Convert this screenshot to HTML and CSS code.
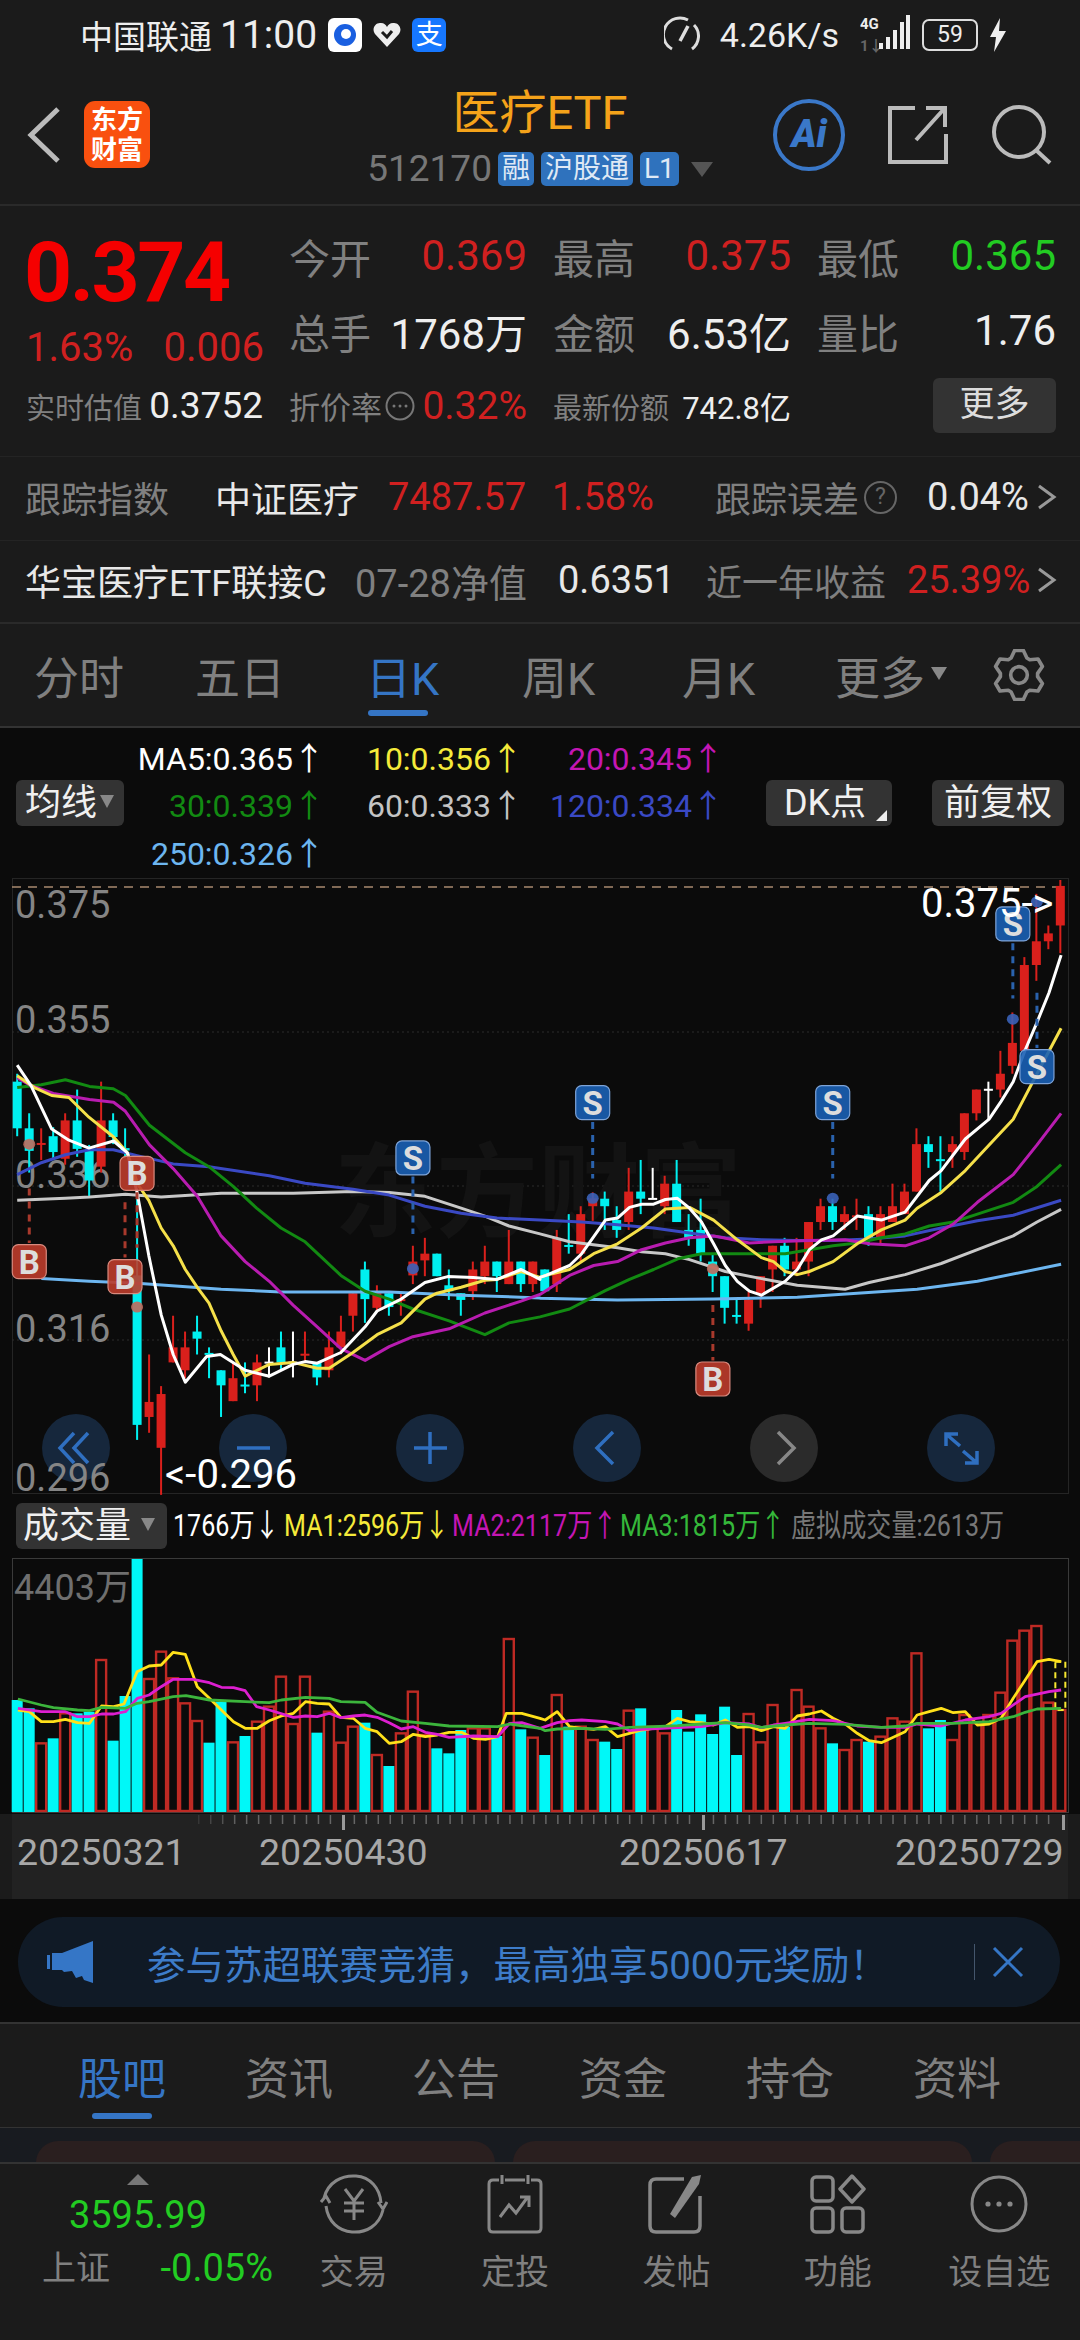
FILE: index.html
```html
<!DOCTYPE html>
<html lang="zh-CN">
<head>
    <meta charset="UTF-8">
    <meta name="viewport" content="width=device-width, initial-scale=1.0">
    <title>医疗ETF</title>
    <link rel="stylesheet" href="styles.css">
</head>
<body>
<div class="page">
    <!-- status bar -->
    <div class="status">
        <span class="carrier">中国联通</span>
        <span class="clock">11:00</span>
        <svg class="status-app" width="34" height="34" viewBox="0 0 34 34"><rect width="34" height="34" rx="6" fill="#fff"/><circle cx="17" cy="17" r="11" fill="#1a5fe0"/><circle cx="18" cy="16" r="5" fill="#fff"/></svg>
        <svg class="status-heart" width="28" height="26" viewBox="0 0 28 26"><path d="M14 25 2 12C-2 6 3 0 8 1c3 0 5 2 6 4 1-2 3-4 6-4 5-1 10 5 6 11z" fill="#eee"/><path d="M9 10l5 5 5-6" fill="none" stroke="#1b1b1b" stroke-width="3"/></svg>
        <span class="status-alipay">支</span>
        <span class="status-gap"></span>
        <svg class="status-gauge" width="36" height="44" viewBox="0 0 36 44"><path d="M8 36A16 16 0 0 1 24 7M30 12a16 16 0 0 1-2 24" fill="none" stroke="#ddd" stroke-width="3"/><path d="M24 13 16 28" stroke="#ddd" stroke-width="3.5"/></svg>
        <span class="net-speed">4.26K/s</span>
        <svg class="status-signal" width="50" height="44" viewBox="0 0 50 44"><text x="0" y="16" class="sig-text">4G</text><text x="0" y="38" class="sig-text sig-dim">1↓</text><rect x="19" y="30" width="4" height="6" fill="#eee"/><rect x="26" y="24" width="4" height="12" fill="#eee"/><rect x="33" y="17" width="4" height="19" fill="#eee"/><rect x="40" y="9" width="4" height="27" fill="#eee"/><rect x="46" y="2" width="4" height="34" fill="#eee"/></svg>
        <div class="battery">59</div>
        <svg class="status-bolt" width="16" height="34" viewBox="0 0 16 34"><path d="M10 0 0 19h6L4 34 16 13H9z" fill="#eee"/></svg>
    </div>

    <!-- title bar -->
    <div class="topbar">
        <div class="topbar-left">
            <svg width="34" height="56" viewBox="0 0 34 56"><polyline points="31,2 4,28 31,54" fill="none" stroke="#bbb" stroke-width="5"/></svg>
            <div class="logo"><span>东方</span><span>财富</span></div>
        </div>
        <div class="topbar-title">
            <div class="fund-name">医疗ETF</div>
            <div class="fund-code">
                <span class="code-num">512170</span>
                <span class="tag">融</span><span class="tag tag-wide">沪股通</span><span class="tag">L1</span>
                <span class="code-caret"></span>
            </div>
        </div>
        <div class="topbar-right">
            <div class="ai-btn">Ai</div>
            <svg width="60" height="58" viewBox="0 0 60 58"><path d="M27 2H2V56H58V28" fill="none" stroke="#bbb" stroke-width="4"/><path d="M28 34 56 3M38 2H57V21" fill="none" stroke="#bbb" stroke-width="4"/></svg>
            <svg width="60" height="60" viewBox="0 0 60 60"><circle cx="27" cy="27" r="25" fill="none" stroke="#bbb" stroke-width="4"/><path d="M45 46 58 58" stroke="#bbb" stroke-width="4"/></svg>
        </div>
    </div>

    <!-- quote block -->
    <div class="quote">
        <div class="price-box">
            <div class="price">0.374</div>
            <div class="price-change"><span>1.63%</span><span>0.006</span></div>
        </div>
        <div class="stat"><span class="muted">今开</span><span class="red">0.369</span></div>
        <div class="stat"><span class="muted">最高</span><span class="red">0.375</span></div>
        <div class="stat stat-last"><span class="muted">最低</span><span class="green">0.365</span></div>
        <div class="stat"><span class="muted">总手</span><span>1768万</span></div>
        <div class="stat"><span class="muted">金额</span><span>6.53亿</span></div>
        <div class="stat stat-last"><span class="muted">量比</span><span>1.76</span></div>
        <div class="stat stat-small stat-first"><span class="muted">实时估值</span><span class="num-m">0.3752</span></div>
        <div class="stat stat-small"><span class="muted discount">折价率<svg width="30" height="30" viewBox="0 0 30 30"><circle cx="15" cy="15" r="13.5" fill="none" stroke="#777" stroke-width="2"/><circle cx="9" cy="15" r="1.5" fill="#777"/><circle cx="15" cy="15" r="1.5" fill="#777"/><circle cx="21" cy="15" r="1.5" fill="#777"/></svg></span><span class="red num-l">0.32%</span></div>
        <div class="stat stat-small"><span class="muted">最新份额</span><span class="num-s">742.8亿</span></div>
        <div class="stat-last"><div class="more-btn">更多</div></div>
    </div>

    <div class="info-row track-row">
        <span class="muted">跟踪指数</span>
        <span class="white">中证医疗</span>
        <span class="red num-row">7487.57</span>
        <span class="red num-row">1.58%</span>
        <span class="muted">跟踪误差</span>
        <span class="help">?</span>
        <span class="white num-row">0.04%</span>
        <svg width="20" height="28" viewBox="0 0 20 28"><polyline points="2,3 17,14 2,25" fill="none" stroke="#999" stroke-width="3"/></svg>
    </div>
    <div class="info-row link-row">
        <span class="white">华宝医疗ETF联接C</span>
        <span class="muted num-row">07-28净值</span>
        <span class="white num-row">0.6351</span>
        <span class="muted">近一年收益</span>
        <span class="red num-row">25.39%</span>
        <svg width="20" height="28" viewBox="0 0 20 28"><polyline points="2,3 17,14 2,25" fill="none" stroke="#999" stroke-width="3"/></svg>
    </div>

    <!-- period tabs -->
    <div class="period-tabs">
        <span>分时</span>
        <span>五日</span>
        <span class="active">日K</span>
        <span>周K</span>
        <span>月K</span>
        <span class="tab-more">更多<i class="caret"></i></span>
        <svg width="52" height="52" viewBox="0 0 50 50"><polygon points="17.4,8.7 20.8,1.4 29.2,1.4 32.6,8.7 35.3,10.3 43.3,9.6 47.5,16.8 42.9,23.4 42.9,26.6 47.5,33.2 43.3,40.4 35.3,39.7 32.6,41.3 29.2,48.6 20.8,48.6 17.4,41.3 14.7,39.7 6.7,40.4 2.5,33.2 7.1,26.6 7.1,23.4 2.5,16.8 6.7,9.6 14.7,10.3" fill="none" stroke="#888" stroke-width="3.5" stroke-linejoin="round"/><circle cx="25" cy="25" r="8" fill="none" stroke="#888" stroke-width="3.5"/></svg>
    </div>

    <!-- MA legend -->
    <div class="chart-head">
        <div class="pill pill-ma">均线<i class="caret caret-sm"></i></div>
        <div class="ma-legend">
            <span class="c-white">MA5:0.365↑</span><span class="c-yellow">10:0.356↑</span><span class="c-magenta">20:0.345↑</span>
            <span class="c-green">30:0.339↑</span><span class="c-gray">60:0.333↑</span><span class="c-blue">120:0.334↑</span>
            <span class="c-sky">250:0.326↑</span>
        </div>
        <div class="pill pill-dk">DK点<i class="corner"></i></div>
        <div class="pill pill-fq">前复权</div>
    </div>

    <!-- candle chart -->
    <svg class="kline" width="1080" height="616" viewBox="0 878 1080 616">
        <rect x="12.5" y="878.5" width="1056" height="615" fill="none" stroke="#252525"/>
        <line x1="12" y1="887" x2="1068" y2="887" stroke="#a98a70" stroke-width="1.5" stroke-dasharray="9 7"/>
        <g stroke="#2c2c2c" stroke-dasharray="2 3">
            <line x1="12" y1="1032" x2="1068" y2="1032"/>
            <line x1="12" y1="1186" x2="1068" y2="1186"/>
            <line x1="12" y1="1340" x2="1068" y2="1340"/>
        </g>
        <text x="334" y="1229" class="watermark">东方财富</text>
        <g fill="#16273c">
            <circle cx="76" cy="1448" r="34"/><circle cx="253" cy="1448" r="34"/><circle cx="430" cy="1448" r="34"/><circle cx="607" cy="1448" r="34"/><circle cx="961" cy="1448" r="34"/>
        </g>
        <circle cx="784" cy="1448" r="34" fill="#2b2b2b"/>
        <g fill="none" stroke="#2f6fc0" stroke-width="3.5">
            <path d="M74 1433 60 1448 74 1463M88 1433 74 1448 88 1463"/>
            <path d="M237 1448H270"/>
            <path d="M414 1448H447M430 1432V1464"/>
            <path d="M613 1432 597 1448 613 1464"/>
            <path d="M946 1446V1434H958M946 1434 960 1446M977 1451V1463H965M977 1463 963 1451"/>
        </g>
        <path d="M778 1432 794 1448 778 1464" fill="none" stroke="#888" stroke-width="3.5"/>
        <g class="axis-text">
            <text x="15" y="918">0.375</text>
            <text x="15" y="1033">0.355</text>
            <text x="15" y="1188">0.336</text>
            <text x="15" y="1342">0.316</text>
            <text x="15" y="1491">0.296</text>
        </g>
        <g id="candles"></g>
        <g id="maLines" fill="none" stroke-width="3" stroke-linejoin="round"></g>
        <g id="signals"></g>
        <g class="tag-text">
            <text x="921" y="917">0.375-&gt;</text>
            <text x="165" y="1488">&lt;-0.296</text>
        </g>
    </svg>

    <!-- volume -->
    <div class="vol-head">
        <div class="pill pill-vol">成交量<i class="caret caret-sm"></i></div>
        <div class="vol-legend">
            <span class="c-white v1">1766万↓</span>
            <span class="c-yellow v2">MA1:2596万↓</span>
            <span class="c-magenta v3">MA2:2117万↑</span>
            <span class="c-lime v4">MA3:1815万↑</span>
            <span class="c-dim v5">虚拟成交量:2613万</span>
        </div>
    </div>
    <svg class="volume" width="1080" height="258" viewBox="0 1556 1080 258">
        <rect x="12.5" y="1558.5" width="1056" height="254" fill="none" stroke="#3a3a3a"/>
        <g id="volBars"></g>
        <text x="14" y="1600" class="vol-max">4403万</text>
        <g id="volLines" fill="none" stroke-width="2.8" stroke-linejoin="round"></g>
    </svg>
    <div class="dates">
        <svg id="ticks" width="1056" height="17" viewBox="12 1814 1056 17"></svg>
        <div class="date-row"><span>20250321</span><span>20250430</span><span>20250617</span><span>20250729</span></div>
    </div>

    <!-- promo banner -->
    <div class="banner-wrap">
        <div class="banner">
            <svg width="46" height="42" viewBox="0 0 46 42"><path d="M0 14h3v14H0zM5 12h10L46 0v42l-9-3-2-4-6 2-4-7-8 1-2-2H5z" fill="#3576c6"/></svg>
            <span class="banner-text">参与苏超联赛竞猜，最高独享5000元奖励！</span>
            <i class="banner-sep"></i>
            <svg width="32" height="32" viewBox="0 0 32 32"><path d="M2 2 30 30M30 2 2 30" stroke="#3576c6" stroke-width="3"/></svg>
        </div>
    </div>

    <!-- news tabs -->
    <div class="news-tabs">
        <span class="active">股吧</span>
        <span>资讯</span>
        <span>公告</span>
        <span>资金</span>
        <span>持仓</span>
        <span>资料</span>
    </div>
    <div class="card-strip">
        <div class="card"></div>
        <div class="card"></div>
        <div class="card card-cut"></div>
    </div>

    <!-- bottom bar -->
    <div class="bottom">
        <div class="index-box">
            <i class="index-up"></i>
            <div class="index-value">3595.99</div>
            <div class="index-line"><span class="muted">上证</span><span class="green">-0.05%</span></div>
        </div>
        <div class="nav-item">
            <svg width="68" height="64" viewBox="0 0 68 64"><path d="M4 26C8 10 22 3 36 4c14 1 24 12 25 27M63 38C59 54 46 61 32 60 19 59 8 50 6 34" fill="none" stroke="#888" stroke-width="3"/><path d="M1 30 6 24 10 31M58 30 63 37 67 30" fill="none" stroke="#888" stroke-width="3"/><path d="M25 17 34 29 43 17M34 29V48M24 31H44M24 39H44" fill="none" stroke="#888" stroke-width="3"/></svg>
            <span>交易</span>
        </div>
        <div class="nav-item">
            <svg width="56" height="60" viewBox="0 0 56 60"><path d="M12 6H6Q2 6 2 10V54Q2 58 6 58H50Q54 58 54 54V10Q54 6 50 6H44M18 6H38" fill="none" stroke="#888" stroke-width="3"/><path d="M15 1V10M41 1V10" stroke="#888" stroke-width="3"/><path d="M13 43 22 31 29 39 40 24M33 23H42V33" fill="none" stroke="#888" stroke-width="3"/></svg>
            <span>定投</span>
        </div>
        <div class="nav-item">
            <svg width="56" height="60" viewBox="0 0 56 60"><path d="M36 5H8Q2 5 2 11V52Q2 58 8 58H46Q52 58 52 52V22" fill="none" stroke="#888" stroke-width="3.5"/><path d="M22 40 44 3 53 1 51 10 27 44z" fill="#888"/></svg>
            <span>发帖</span>
        </div>
        <div class="nav-item">
            <svg width="56" height="60" viewBox="0 0 56 60"><g fill="none" stroke="#888" stroke-width="3.5"><rect x="2" y="3" width="21" height="24" rx="4"/><rect x="2" y="34" width="21" height="24" rx="4"/><rect x="32" y="34" width="21" height="24" rx="4"/><polygon points="42,2 54,15 42,28 30,15" stroke-linejoin="round"/></g></svg>
            <span>功能</span>
        </div>
        <div class="nav-item">
            <svg width="60" height="60" viewBox="0 0 60 60"><circle cx="30" cy="30" r="27" fill="none" stroke="#888" stroke-width="3"/><circle cx="19" cy="30" r="2.6" fill="#888"/><circle cx="30" cy="30" r="2.6" fill="#888"/><circle cx="41" cy="30" r="2.6" fill="#888"/></svg>
            <span class="nav-wide">设自选</span>
        </div>
    </div>
</div>
<script src="chart.js"></script>
</body>
</html>
```
FILE: styles.css
```css
* {
    box-sizing: border-box;
}
body {
    margin: 0;
    background-color: #1b1b1b;
    font-family: Roboto, "Noto Sans CJK SC", sans-serif;
    color: #eee;
}
.page {
    width: 1080px;
    height: 2340px;
    overflow: hidden;
}
svg {
    display: block;
    flex-shrink: 0;
}
.muted { color: #808080; }
.red { color: #d02020; }
.green { color: #22cc22; }
.white { color: #e8e8e8; }

/* status bar */
.status {
    height: 70px;
    display: flex;
    align-items: center;
    padding-left: 80px;
    padding-right: 74px;
}
.carrier {
    font-size: 33px;
}
.clock {
    font-size: 39px;
    margin-left: 8px;
}
.status-app {
    margin-left: 11px;
}
.status-heart {
    margin-left: 11px;
}
.status-alipay {
    width: 34px;
    height: 34px;
    margin-left: 11px;
    border-radius: 6px;
    background: #1677ff;
    color: #fff;
    font-size: 27px;
    line-height: 34px;
    text-align: center;
}
.status-gap {
    flex: 1;
}
.net-speed {
    font-size: 34px;
    margin-left: 20px;
}
.status-signal {
    margin-left: 21px;
}
.sig-text {
    font-size: 15px;
    font-weight: 700;
    fill: #eee;
}
.sig-dim {
    fill: #666;
}
.battery {
    width: 56px;
    height: 32px;
    margin-left: 12px;
    border: 2.5px solid #ddd;
    border-radius: 7px;
    font-size: 23px;
    line-height: 27px;
    text-align: center;
}
.status-bolt {
    margin-left: 12px;
}

/* title bar */
.topbar {
    height: 136px;
    display: grid;
    grid-template-columns: 1fr auto 1fr;
    border-bottom: 2px solid #2a2a2a;
}
.topbar-left {
    display: flex;
    align-items: center;
    gap: 23px;
    padding-left: 27px;
    padding-bottom: 5px;
}
.logo {
    width: 66px;
    height: 67px;
    border-radius: 11px;
    background: #f9500f;
    display: flex;
    flex-direction: column;
    align-items: center;
    justify-content: center;
    color: #fff;
    font-size: 26px;
    font-weight: 700;
    line-height: 30px;
}
.topbar-title {
    display: flex;
    flex-direction: column;
    align-items: center;
    padding-top: 18px;
}
.fund-name {
    font-size: 47px;
    line-height: 50px;
    color: #f5a31a;
}
.fund-code {
    display: flex;
    align-items: center;
    margin-top: 13px;
}
.code-num {
    font-size: 37px;
    line-height: 36px;
    color: #777;
    margin-right: 6px;
}
.tag {
    height: 34px;
    padding: 0 4px;
    margin-right: 7px;
    border-radius: 5px;
    background: #2f72bd;
    color: #dfe9f5;
    font-size: 28px;
    line-height: 33px;
}
.code-caret {
    margin-left: 5px;
    border-left: 11px solid transparent;
    border-right: 11px solid transparent;
    border-top: 15px solid #555;
}
.topbar-right {
    display: flex;
    align-items: center;
    justify-content: flex-end;
    padding-right: 28px;
    padding-bottom: 5px;
    gap: 44px;
}
.ai-btn {
    width: 72px;
    height: 72px;
    margin-right: -1px;
    border: 4px solid #3a78c9;
    border-radius: 50%;
    color: #3a78c9;
    font-size: 38px;
    font-weight: 900;
    font-style: italic;
    line-height: 62px;
    text-align: center;
}

/* quote block */
.quote {
    height: 251px;
    padding-top: 12px;
    padding-left: 26px;
    border-bottom: 1px solid #242424;
    display: grid;
    grid-template-columns: 263px 264px 264px 239px;
    grid-template-rows: 75px 75px 75px;
}
.price-box {
    grid-row: 1 / span 2;
    width: 238px;
}
.price {
    margin-top: 4px;
    margin-left: -2px;
    font-size: 84px;
    font-weight: 700;
    line-height: 102px;
    letter-spacing: -2.5px;
    color: #f50000;
}
.price-change {
    margin-top: 1px;
    display: flex;
    justify-content: space-between;
    font-size: 40px;
    line-height: 46px;
    color: #d02020;
}
.stat {
    display: flex;
    align-items: center;
    justify-content: space-between;
    padding-right: 26px;
    font-size: 42px;
}
.stat .muted {
    font-size: 41px;
}
.stat-last {
    padding-right: 0;
    display: flex;
    align-items: center;
    justify-content: space-between;
}
.stat-small {
    font-size: 29px;
}
.stat.stat-small .muted {
    font-size: 29px;
}
.stat-first {
    width: 237px;
    padding-right: 0;
}
.num-m { font-size: 37px; }
.num-l { font-size: 39px; }
.num-s { font-size: 31px; }
.stat.stat-small .discount {
    display: flex;
    align-items: center;
    gap: 3px;
    font-size: 31px;
}
.more-btn {
    width: 123px;
    height: 55px;
    margin-left: 116px;
    border-radius: 6px;
    background: #333;
    color: #ddd;
    font-size: 35px;
    line-height: 54px;
    text-align: center;
}
.info-row {
    height: 84px;
    padding-left: 25px;
    padding-bottom: 3px;
    display: grid;
    align-items: center;
    font-size: 36px;
    border-bottom: 1px solid #242424;
}
.num-row {
    font-size: 38px;
}
.track-row {
    grid-template-columns: 190px 173px 164px 163px 149px 63px 110px 1fr;
}
.link-row {
    height: 83px;
    grid-template-columns: 330px 203px 148px 201px 130px 1fr;
    border-bottom: 2px solid #2a2a2a;
}
.help {
    width: 33px;
    height: 33px;
    border: 2.5px solid #666;
    border-radius: 50%;
    color: #666;
    font-size: 23px;
    line-height: 28px;
    text-align: center;
}

/* period tabs */
.period-tabs {
    height: 104px;
    padding-left: 34px;
    display: grid;
    grid-template-columns: 161px 171px 156px 160px 153px 158px 52px;
    align-items: center;
    font-size: 45px;
    color: #808080;
    border-bottom: 2px solid #333;
}
.period-tabs .active {
    color: #3575c5;
    position: relative;
}
.period-tabs .active::after {
    content: "";
    position: absolute;
    left: 2px;
    bottom: -8px;
    width: 60px;
    height: 6px;
    border-radius: 3px;
    background: #3575c5;
}
.tab-more {
    display: flex;
    align-items: center;
    gap: 6px;
}
.caret {
    display: inline-block;
    margin-top: -4px;
    border-left: 8px solid transparent;
    border-right: 8px solid transparent;
    border-top: 13px solid #888;
}
.caret-sm {
    border-left-width: 7px;
    border-right-width: 7px;
    border-top-width: 13px;
    margin-left: 3px;
}

/* MA legend */
.chart-head {
    height: 150px;
    background: #0b0b0b;
    display: flex;
    align-items: center;
    padding-left: 16px;
    position: relative;
}
.pill {
    height: 46px;
    border-radius: 6px;
    background: #333;
    color: #f0f0f0;
    font-size: 36px;
    line-height: 44px;
    display: flex;
    align-items: center;
    justify-content: center;
}
.pill-ma {
    width: 108px;
    justify-content: flex-start;
    padding-left: 9px;
}
.pill-dk {
    width: 126px;
    margin-left: 42px;
    padding-right: 8px;
    position: relative;
}
.pill-fq {
    width: 132px;
    margin-left: 40px;
}
.corner {
    position: absolute;
    right: 5px;
    bottom: 5px;
    border-left: 11px solid transparent;
    border-bottom: 11px solid #eee;
}
.ma-legend {
    width: 600px;
    display: grid;
    grid-template-columns: 201px 198px 201px;
    grid-auto-rows: 47.5px;
    align-items: center;
    justify-items: end;
    font-size: 32px;
    white-space: nowrap;
}
.c-white { color: #fff; }
.c-yellow { color: #f5ea3a; }
.c-magenta { color: #c416b4; }
.c-green { color: #128a12; }
.c-lime { color: #35b83a; }
.c-gray { color: #c4c4c4; }
.c-blue { color: #3a49c4; }
.c-sky { color: #6db6f0; }
.c-dim { color: #777; }

/* chart */
.kline, .volume {
    background: #0b0b0b;
    overflow: visible;
}
.watermark {
    font-size: 102px;
    font-weight: 700;
    fill: #131313;
}
.axis-text {
    font-size: 38px;
    fill: #858585;
}
.tag-text {
    font-size: 40px;
    fill: #fff;
}
.signal-text {
    font-size: 33px;
    font-weight: 700;
    fill: #ddd;
    text-anchor: middle;
}
.vol-max {
    font-size: 36px;
    fill: #6f6f6f;
}

/* volume */
.vol-head {
    height: 62px;
    background: #0b0b0b;
    display: flex;
    align-items: flex-start;
    padding-top: 9px;
    padding-left: 16px;
}
.pill-vol {
    width: 151px;
    justify-content: flex-start;
    padding-left: 7px;
    font-size: 36px;
    gap: 7px;
}
.vol-legend {
    position: relative;
    flex: 1;
    font-size: 31px;
    line-height: 46px;
    white-space: nowrap;
}
.vol-legend span {
    position: absolute;
    top: 0;
    transform: scaleX(.81);
    transform-origin: left center;
}
.v1 { left: 6px; }
.v2 { left: 117px; }
.v3 { left: 285px; }
.v4 { left: 453px; }
.v5 { left: 624px; }
.dates {
    height: 85px;
    margin: 0 12px;
    background: #222;
}
.date-row {
    display: grid;
    grid-template-columns: 242px 360px 276px auto;
    padding-left: 5px;
    font-size: 37.5px;
    line-height: 43px;
    color: #a8a8a8;
}

/* banner */
.banner-wrap {
    height: 125px;
    background: #0b0b0b;
    padding: 18px 20px 0 18px;
    border-bottom: 2px solid #333;
}
.banner {
    height: 90px;
    border-radius: 45px;
    background: #101a26;
    display: flex;
    align-items: center;
    padding-left: 29px;
}
.banner-text {
    margin-left: 54px;
    font-size: 38.5px;
    color: #3d7cc9;
    white-space: nowrap;
    width: 827px;
}
.banner-sep {
    width: 1px;
    height: 36px;
    background: #44566c;
    margin-right: 17px;
}

/* news tabs */
.news-tabs {
    height: 104px;
    padding-left: 78px;
    display: grid;
    grid-template-columns: repeat(6, 167px);
    align-items: center;
    font-size: 44px;
    color: #808080;
    border-bottom: 1px solid #333;
}
.news-tabs .active {
    color: #3575c5;
    position: relative;
}
.news-tabs .active::after {
    content: "";
    position: absolute;
    left: 14px;
    bottom: -11px;
    width: 60px;
    height: 6px;
    border-radius: 3px;
    background: #3575c5;
}
.card-strip {
    height: 36px;
    padding-top: 13px;
    padding-left: 36px;
    display: flex;
    gap: 18px;
    background: #181b20;
    overflow: hidden;
    border-bottom: 2px solid #333;
}
.card {
    width: 459px;
    height: 40px;
    flex-shrink: 0;
    border-radius: 22px 22px 0 0;
    background: #2a1f1f;
}

/* bottom bar */
.bottom {
    height: 176px;
    display: flex;
    align-items: flex-start;
}
.index-box {
    width: 273px;
    padding-top: 10px;
    display: flex;
    flex-direction: column;
    align-items: center;
}
.index-up {
    margin-left: 3px;
    border-left: 11px solid transparent;
    border-right: 11px solid transparent;
    border-bottom: 11px solid #777;
}
.index-value {
    margin-top: 8px;
    margin-left: 3px;
    font-size: 38px;
    line-height: 44px;
    color: #22cc22;
}
.index-line {
    margin-top: 9px;
    margin-left: 42px;
    align-self: flex-start;
    display: flex;
    width: 231px;
    justify-content: space-between;
    font-size: 34px;
    line-height: 44px;
}
.index-line .green {
    font-size: 38px;
}
.nav-item {
    width: 161.4px;
    height: 130px;
    padding-top: 8px;
    display: flex;
    flex-direction: column;
    align-items: center;
    font-size: 34px;
    color: #808080;
}
.nav-item svg {
    height: 64px;
}
.nav-item span {
    margin-top: 16px;
    line-height: 40px;
}
```
FILE: chart.js
```js
// all chart coordinates are read off two half-width grids, left and right,
// so they get scaled to page pixels in one place
const SVG_NS = "http://www.w3.org/2000/svg";
const XK = 540 / 1568;
const YK = 620 / 1568;

const kx = (x, side) => (side === "r" ? 540 : 0) + x * XK;
const ky = y => 880 + y * YK;
const vy = y => 1500 + y / 3;
const barX = i => 17.2 + 11.99 * i;

function make(parent, tag, attrs) {
    const el = document.createElementNS(SVG_NS, tag);
    for (const key in attrs) el.setAttribute(key, attrs[key]);
    parent.appendChild(el);
    return el;
}

// high, low, body top, body bottom, colour
const candles = [
    [490,648,510,628,"c"],[590,740,628,685,"c"],[628,708,665,669,"r"],[625,708,648,688,"c"],
    [590,720,608,705,"r"],[530,700,608,680,"c"],[670,800,685,760,"c"],[510,740,608,725,"r"],
    [590,668,608,650,"c"],[628,700,678,684,"c"],[800,1416,1000,1378,"c"],[1200,1398,1320,1358,"r"],
    [1280,1555,1300,1436,"r"],[1102,1220,1182,1220,"r"],[1142,1260,1182,1240,"r"],[1102,1200,1142,1160,"c"],
    [1182,1260,1196,1200,"c"],[1240,1358,1240,1278,"c"],[1220,1318,1260,1318,"r"],[1220,1298,1276,1280,"c"],
    [1200,1318,1220,1278,"r"],[1182,1258,1218,1222,"w"],[1142,1240,1182,1220,"c"],[1142,1258,1218,1222,"w"],
    [1142,1220,1198,1202,"r"],[1220,1278,1220,1258,"c"],[1142,1258,1182,1240,"r"],[1102,1200,1142,1182,"r"],
    [1045,1142,1045,1102,"r"],[965,1120,985,1060,"c"],[1025,1090,1045,1082,"r"],[1045,1102,1045,1080,"c"],
    [1045,1102,1060,1064,"r"],[925,1022,965,1000,"r"],[905,1002,945,962,"r"],[945,1002,945,1002,"c"],
    [985,1062,1025,1040,"c"],[1045,1102,1045,1062,"c"],[965,1062,985,1040,"r"],[925,1022,965,1002,"r"],
    [965,1042,965,1002,"c"],[885,1022,965,1022,"r"],[965,1042,965,1022,"c"],[965,1042,965,1022,"r"],
    [985,1040,985,1040,"c"],[885,1042,905,1022,"r"],[845,945,923,927,"c"],[825,965,845,945,"r"],
    [790,862,805,825,"r"],[788,885,806,825,"c"],[825,905,860,885,"c"],[728,885,788,865,"r"],
    [708,845,788,806,"c"],[728,806,804,808,"w"],[748,845,768,825,"r"],[708,865,768,865,"c"],
    [845,925,885,905,"c"],[806,965,885,945,"c"],[945,1042,965,1002,"c"],[1002,1122,1002,1082,"c"],
    [1062,1122,1100,1104,"c"],[1042,1140,1062,1122,"r"],[1002,1082,1002,1045,"r"],[925,1042,925,985,"r"],
    [905,1002,925,985,"c"],[905,1002,965,985,"r"],[865,1002,865,965,"r"],[806,885,825,865,"r"],
    [806,885,825,865,"c"],[825,885,845,865,"r"],[806,885,848,852,"r"],[825,925,845,905,"c"],
    [825,920,845,905,"r"],[768,865,825,865,"r"],[768,845,788,845,"r"],[628,788,668,788,"r"],
    [648,728,668,688,"c"],[648,788,706,710,"c"],[648,728,668,688,"r"],[590,708,590,688,"r"],
    [530,608,530,590,"r"],[510,608,528,532,"w"],[432,550,490,530,"r"],[335,490,412,470,"r"],
    [195,432,215,432,"r"],[35,255,155,215,"r"],[115,175,135,155,"r"],[0,185,15,115,"r"]
];
const candleColors = { r: "#d9201c", c: "#00f0f0", w: "#fff" };
const candleLayer = document.getElementById("candles");
candles.forEach((c, i) => {
    const x = barX(i);
    const fill = candleColors[c[4]];
    make(candleLayer, "rect", { x: x - 1, y: ky(c[0]), width: 2, height: (c[1] - c[0]) * YK, fill });
    make(candleLayer, "rect", { x: x - 4.5, y: ky(c[2]), width: 9, height: Math.max(2, (c[3] - c[2]) * YK), fill });
});

const maLines = [
    ["#6db6f0", "120,1008 260,1015 398,1020 642,1035 816,1042 1130,1042 1339,1050 1568,1057",
        "0,1058 225,1062 504,1060 747,1055 921,1045 1095,1035 1270,1015 1513,972"],
    ["#c8c8c8", "50,810 190,805 260,802 364,795 468,802 642,792 851,792 1025,788 1130,790 1234,800 1339,830 1408,850 1478,875 1568,895",
        "0,895 86,915 225,930 295,940 364,945 434,960 538,990 643,1008 747,1025 886,1035 956,1018 1060,998 1165,970 1270,935 1374,900 1443,865 1513,833"],
    ["#3a49c4", "50,745 120,715 190,695 260,682 329,682 398,697 503,718 607,725 782,748 886,767 1025,782 1130,797 1234,825 1339,843 1443,855 1568,860",
        "0,860 121,865 225,872 330,880 434,893 538,905 643,910 747,912 851,912 956,908 1060,900 1165,880 1270,862 1374,848 1513,810"],
    ["#128a12", "50,525 120,518 190,505 260,522 329,528 364,545 434,620 538,690 607,725 677,775 745,830 816,880 886,915 990,1000 1060,1040 1130,1060 1199,1085 1304,1115 1408,1150 1478,1120 1568,1105",
        "0,1105 86,1085 191,1038 260,1010 330,985 400,958 469,945 573,945 643,945 712,945 782,935 851,925 921,918 991,905 1060,895 1130,875 1200,865 1270,845 1374,815 1443,775 1513,720"],
    ["#b81cb0", "50,500 85,518 155,540 190,545 260,555 330,562 364,585 434,670 503,730 573,800 642,900 712,965 782,1015 851,1075 921,1130 990,1185 1060,1215 1130,1180 1199,1155 1304,1135 1408,1095 1513,1065 1568,1048",
        "0,1048 86,1000 156,975 225,965 295,935 364,918 434,905 504,900 608,918 678,915 782,912 886,910 956,920 1060,925 1130,905 1200,870 1270,815 1374,745 1443,670 1513,590"],
    ["#f5e04a", "50,495 100,525 150,545 200,550 258,600 330,650 370,690 400,770 432,810 468,880 503,925 538,985 573,1030 607,1070 642,1140 677,1200 712,1255 782,1225 851,1220 921,1235 956,1235 1025,1195 1095,1150 1165,1120 1234,1060 1269,1045 1339,1030 1408,1012 1443,1010 1513,990 1568,1005",
        "0,1005 17,1000 86,985 156,945 225,920 295,880 364,832 434,828 504,860 573,910 643,955 678,965 712,990 747,998 782,990 851,965 921,920 991,885 1060,860 1095,830 1165,790 1235,735 1304,670 1374,605 1443,490 1513,375"],
    ["#fff", "50,468 90,520 150,630 200,658 258,678 330,660 370,690 398,790 432,950 468,1100 503,1200 538,1270 600,1205 640,1200 712,1240 782,1255 851,1225 886,1218 921,1222 990,1195 1060,1130 1095,1090 1165,1060 1234,1018 1300,1003 1374,1005 1443,1010 1513,985 1568,1010",
        "0,1005 17,1000 86,975 121,945 190,860 225,855 260,828 295,820 330,820 364,808 399,805 434,830 469,865 504,920 538,975 573,1015 608,1040 643,1050 712,1015 747,985 782,935 817,910 851,900 886,875 921,850 956,855 991,860 1060,840 1130,760 1165,735 1235,655 1304,605 1339,560 1374,510 1409,430 1443,360 1478,285 1513,190"]
];

function toPoints(left, right, mapY) {
    const half = (str, side) => str.split(" ").map(p => {
        const [x, y] = p.split(",").map(Number);
        return kx(x, side).toFixed(1) + "," + mapY(y).toFixed(1);
    });
    return half(left, "l").concat(half(right, "r")).join(" ");
}

const lineLayer = document.getElementById("maLines");
maLines.forEach(m => {
    make(lineLayer, "polyline", { points: toPoints(m[1], m[2], ky), stroke: m[0] });
});

// buy/sell marks: letter, side, x, label y, dash from, dash to, dot y
const signals = [
    ["B", "l", 85, 965, 780, 918, 668],
    ["B", "l", 363, 1003, 815, 955, null],
    ["B", "l", 398, 742, 790, 930, 1080],
    ["S", "l", 1199, 703, 750, 895, 983],
    ["S", "r", 153, 563, 612, 755, 805],
    ["B", "r", 502, 1262, 1075, 1215, 983],
    ["S", "r", 850, 563, 612, 755, 805],
    ["S", "r", 1373, 111, 160, 300, 352],
    ["S", "r", 1443, 472, 285, 425, 55]
];
const signalLayer = document.getElementById("signals");
signals.forEach(s => {
    const x = kx(s[2], s[1]);
    const buy = s[0] === "B";
    const dash = buy ? "#a8392c" : "#2a62ad";
    make(signalLayer, "line", { x1: x, x2: x, y1: ky(s[4]), y2: ky(s[5]), stroke: dash, "stroke-width": 3, "stroke-dasharray": "7 6" });
    if (s[6] !== null) {
        make(signalLayer, "ellipse", { cx: x, cy: ky(s[6]), rx: 6, ry: 5.5, fill: buy ? "#c06a5c" : "#3a62b8", opacity: .9 });
    }
    const y = ky(s[3]);
    make(signalLayer, "rect", {
        x: x - 17, y: y - 17, width: 34, height: 34, rx: 6,
        fill: buy ? "#bd3c2b" : "#1a5fb4", stroke: buy ? "#d88a7e" : "#7ea4d8", "stroke-width": 1.2, "fill-opacity": .9
    });
    make(signalLayer, "text", { x, y: y + 12, class: "signal-text" }).textContent = s[0];
});

// volume bars: top of each bar
const volTops = [
    600,625,730,715,640,640,635,480,722,588,177,537,455,535,610,663,728,605,727,708,665,620,530,672,530,698,635,728,680,668,765,798,700,575,705,745,760,690,685,685,708,417,688,713,
    765,585,680,680,720,725,747,632,625,680,700,630,695,643,702,620,765,642,727,615,680,570,620,685,730,750,720,725,710,655,665,460,685,660,720,645,670,645,578,422,392,378,608,630
];
const cyanBars = [0,1,3,5,6,8,9,10,16,17,19,25,29,31,35,36,37,40,42,44,46,49,50,52,55,56,57,58,59,60,64,68,71,76,77];
const volLayer = document.getElementById("volBars");
volTops.forEach((top, i) => {
    const x = barX(i);
    if (cyanBars.includes(i)) {
        make(volLayer, "rect", { x: x - 5.5, y: vy(top), width: 11, height: 1812 - vy(top), fill: "#00f8f8" });
    } else {
        make(volLayer, "rect", { x: x - 5, y: vy(top), width: 10, height: 1811 - vy(top), fill: "#0b0b0b", stroke: "#bf2a24", "stroke-width": 2.4 });
    }
});
make(volLayer, "rect", { x: barX(87) - 5, y: vy(485), width: 10, height: (630 - 485) / 3, fill: "none", stroke: "#f5e630", "stroke-width": 2, "stroke-dasharray": "6 4" });

const volLines = [
    ["#ffe01a", "52,630 85,635 120,665 155,665 190,658 225,668 260,670 295,618 330,620 360,612 398,515 433,498 468,495 503,457 538,463 573,560 608,595 643,630 678,665 712,685 747,685 782,662 817,648 852,640 887,605 921,610 956,612 990,652 1026,655 1060,685 1095,695 1130,730 1165,725 1200,703 1235,710 1270,705 1304,697 1340,697 1375,715 1410,718 1445,710 1470,640 1515,640 1568,655",
        "0,655 15,660 50,635 86,680 121,685 156,688 190,680 225,710 260,700 295,690 330,685 364,680 399,655 434,665 469,668 504,675 538,660 573,682 608,680 643,692 678,680 712,685 747,648 782,642 817,633 851,655 886,672 921,700 956,722 991,728 1026,712 1060,695 1095,645 1130,635 1165,625 1200,638 1235,635 1270,675 1304,672 1339,655 1374,595 1409,540 1443,485 1478,478 1513,485"],
    ["#dd1fd0", "52,625 120,635 190,635 225,650 260,650 295,642 330,642 364,635 399,595 433,585 468,560 503,538 560,538 608,548 643,562 678,563 712,572 745,620 782,630 852,652 887,648 921,650 956,640 990,653 1026,648 1060,645 1095,652 1130,668 1165,687 1200,680 1235,697 1270,703 1304,712 1375,708 1445,710 1480,670 1515,668 1568,685",
        "0,685 50,668 86,662 121,660 190,665 225,672 260,692 295,688 400,683 469,680 538,668 608,672 643,683 678,675 712,670 782,658 851,662 921,678 991,682 1060,682 1095,672 1165,678 1235,660 1304,650 1339,640 1409,590 1478,575 1513,570"],
    ["#3cb53c", "52,597 120,615 155,623 225,630 260,632 295,622 364,625 398,610 433,605 503,590 540,587 608,600 712,605 782,608 817,600 887,592 956,595 990,605 1060,607 1095,637 1165,663 1235,670 1304,678 1445,680 1480,672 1568,685",
        "0,685 15,692 50,687 121,685 190,688 260,682 330,680 399,677 469,672 538,668 608,675 643,682 712,675 782,670 886,673 991,682 1060,678 1095,670 1200,670 1304,665 1374,650 1409,637 1443,627 1513,625"]
];
const volLineLayer = document.getElementById("volLines");
volLines.forEach(m => {
    make(volLineLayer, "polyline", { points: toPoints(m[1], m[2], vy), stroke: m[0] });
});

// date axis ticks, faded in from the left
const tickLayer = document.getElementById("ticks");
const majors = [342, 702, 1062];
for (let x = 198; x < 1068; x += 11.97) {
    const near = majors.find(m => Math.abs(m - x) < 6);
    make(tickLayer, "rect", {
        x: near || x, y: 1815, width: near ? 3 : 1.5, height: near ? 15 : 9,
        fill: near ? "#999" : "#666", opacity: Math.min(1, (x - 180) / 60)
    });
}
```
